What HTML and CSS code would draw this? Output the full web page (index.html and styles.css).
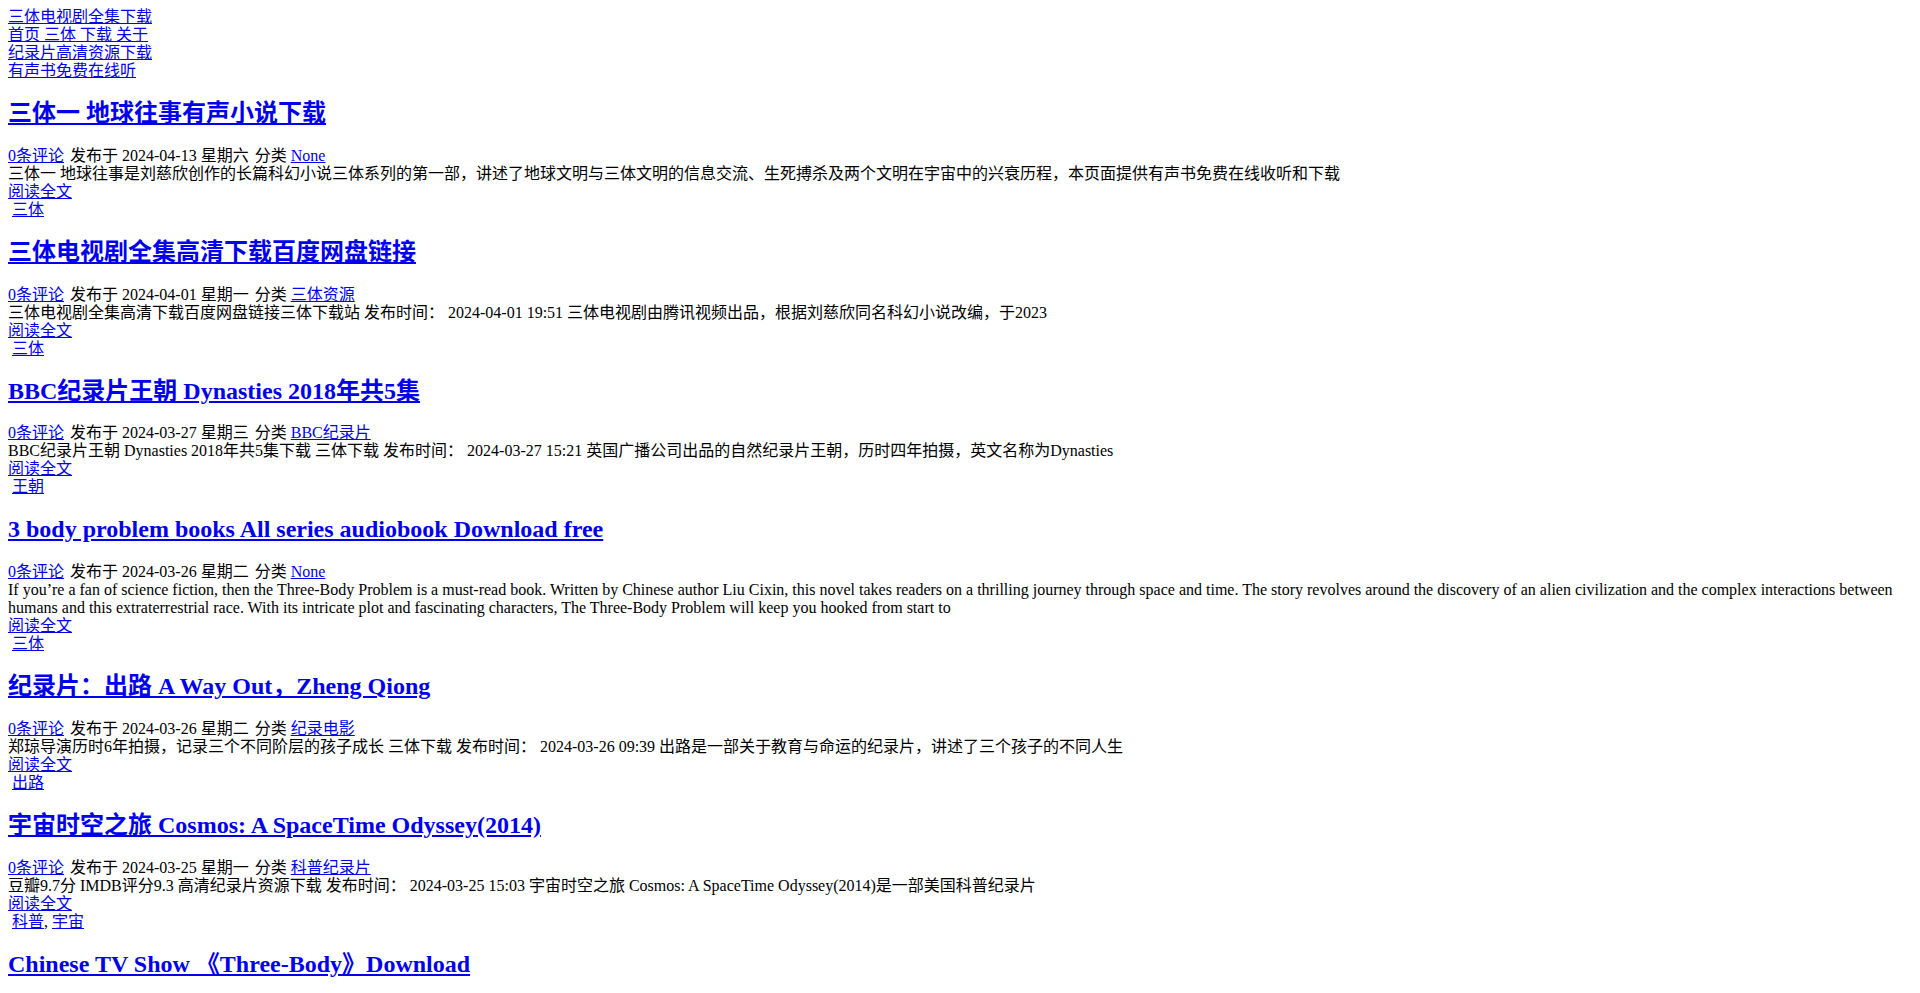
FILE: index.html
```html
<!DOCTYPE html>
<html lang="zh-CN">
<head>
<meta charset="utf-8">
<title>三体下载站</title>
<link rel="stylesheet" href="styles.css">
</head>
<body>
<nav class="site-nav">
  <a href="#">三体电视剧全集下载</a>
  <a href="#">首页 三体 下载 关于</a>
  <a href="#">纪录片高清资源下载</a>
  <a href="#">有声书免费在线听</a>
</nav>

<main class="posts">
  <article class="post">
    <h2 class="post-title"><a href="#">三体一 地球往事有声小说下载</a></h2>
    <div class="post-meta"><a href="#">0条评论</a> <span class="meta-item">发布于 2024-04-13 星期六</span> <span class="meta-item">分类 <a href="#">None</a></span></div>
    <div class="post-excerpt">三体一 地球往事是刘慈欣创作的长篇科幻小说三体系列的第一部，讲述了地球文明与三体文明的信息交流、生死搏杀及两个文明在宇宙中的兴衰历程，本页面提供有声书免费在线收听和下载</div>
    <div><a href="#">阅读全文</a></div>
    <div class="post-tags"><a href="#">三体</a></div>
  </article>

  <article class="post">
    <h2 class="post-title"><a href="#">三体电视剧全集高清下载百度网盘链接</a></h2>
    <div class="post-meta"><a href="#">0条评论</a> <span class="meta-item">发布于 2024-04-01 星期一</span> <span class="meta-item">分类 <a href="#">三体资源</a></span></div>
    <div class="post-excerpt">三体电视剧全集高清下载百度网盘链接三体下载站 发布时间： 2024-04-01 19:51 三体电视剧由腾讯视频出品，根据刘慈欣同名科幻小说改编，于2023</div>
    <div><a href="#">阅读全文</a></div>
    <div class="post-tags"><a href="#">三体</a></div>
  </article>

  <article class="post">
    <h2 class="post-title"><a href="#">BBC纪录片王朝 Dynasties 2018年共5集</a></h2>
    <div class="post-meta"><a href="#">0条评论</a> <span class="meta-item">发布于 2024-03-27 星期三</span> <span class="meta-item">分类 <a href="#">BBC纪录片</a></span></div>
    <div class="post-excerpt">BBC纪录片王朝 Dynasties 2018年共5集下载 三体下载 发布时间： 2024-03-27 15:21 英国广播公司出品的自然纪录片王朝，历时四年拍摄，英文名称为Dynasties</div>
    <div><a href="#">阅读全文</a></div>
    <div class="post-tags"><a href="#">王朝</a></div>
  </article>

  <article class="post">
    <h2 class="post-title"><a href="#">3 body problem books All series audiobook Download free</a></h2>
    <div class="post-meta"><a href="#">0条评论</a> <span class="meta-item">发布于 2024-03-26 星期二</span> <span class="meta-item">分类 <a href="#">None</a></span></div>
    <div class="post-excerpt">If you’re a fan of science fiction, then the Three-Body Problem is a must-read book. Written by Chinese author Liu Cixin, this novel takes readers on a thrilling journey through space and time. The story revolves around the discovery of an alien civilization and the complex interactions between humans and this extraterrestrial race. With its intricate plot and fascinating characters, The Three-Body Problem will keep you hooked from start to</div>
    <div><a href="#">阅读全文</a></div>
    <div class="post-tags"><a href="#">三体</a></div>
  </article>

  <article class="post">
    <h2 class="post-title"><a href="#">纪录片：出路 A Way Out，Zheng Qiong</a></h2>
    <div class="post-meta"><a href="#">0条评论</a> <span class="meta-item">发布于 2024-03-26 星期二</span> <span class="meta-item">分类 <a href="#">纪录电影</a></span></div>
    <div class="post-excerpt">郑琼导演历时6年拍摄，记录三个不同阶层的孩子成长 三体下载 发布时间： 2024-03-26 09:39 出路是一部关于教育与命运的纪录片，讲述了三个孩子的不同人生</div>
    <div><a href="#">阅读全文</a></div>
    <div class="post-tags"><a href="#">出路</a></div>
  </article>

  <article class="post">
    <h2 class="post-title"><a href="#">宇宙时空之旅 Cosmos: A SpaceTime Odyssey(2014)</a></h2>
    <div class="post-meta"><a href="#">0条评论</a> <span class="meta-item">发布于 2024-03-25 星期一</span> <span class="meta-item">分类 <a href="#">科普纪录片</a></span></div>
    <div class="post-excerpt">豆瓣9.7分 IMDB评分9.3 高清纪录片资源下载 发布时间： 2024-03-25 15:03 宇宙时空之旅 Cosmos: A SpaceTime Odyssey(2014)是一部美国科普纪录片</div>
    <div><a href="#">阅读全文</a></div>
    <div class="post-tags"><a href="#">科普</a>, <a href="#">宇宙</a></div>
  </article>

  <article class="post">
    <h2 class="post-title"><a href="#">Chinese TV Show 《Three-Body》Download</a></h2>
    <div class="post-meta"><a href="#">0条评论</a> <span class="meta-item">发布于 2024-03-24 星期日</span> <span class="meta-item">分类 <a href="#">None</a></span></div>
    <div class="post-excerpt">Three-Body is a Chinese television series adapted from the science fiction novel by Liu Cixin.</div>
    <div><a href="#">阅读全文</a></div>
    <div class="post-tags"><a href="#">三体</a></div>
  </article>
</main>
</body>
</html>
```

FILE: styles.css
```css
body {
  margin: 8px;
  font-family: "Liberation Serif", "Noto Sans CJK SC", serif;
  font-size: 16px;
  line-height: 18px;
  color: #000;
  background: #fff;
}

a {
  color: #0000ee;
}

.site-nav a {
  display: block;
  width: max-content;
}

.post-title {
  font-size: 24px;
  line-height: 27px;
  font-weight: bold;
  margin: 0.83em 0;
}

.meta-item {
  margin-left: 2px;
}

.post-tags {
  padding-left: 4px;
}
```
